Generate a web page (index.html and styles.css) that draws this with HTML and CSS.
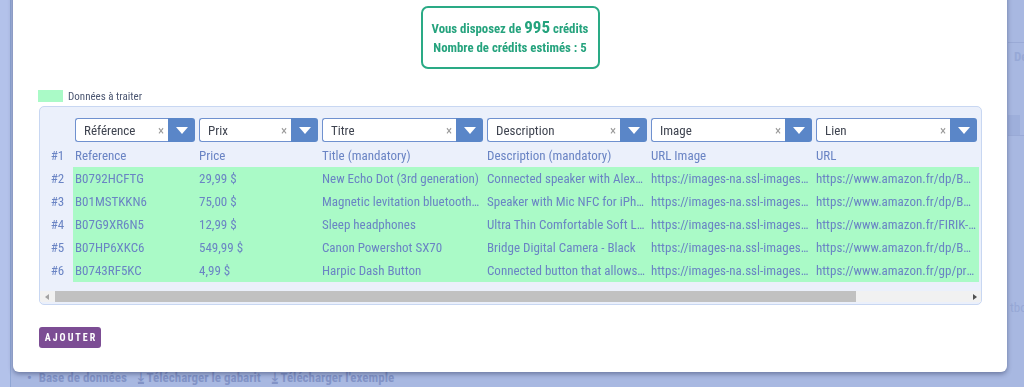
FILE: index.html
```html
<!DOCTYPE html>
<html lang="fr">
<head>
    <meta charset="UTF-8">
    <meta name="viewport" content="width=device-width, initial-scale=1.0">
    <title>Import de données</title>
    <link rel="stylesheet" href="styles.css">
</head>
<body>
    <!-- page behind the overlay -->
    <div class="page">
        <div class="sidebar"></div>
        <div class="page-main">
            <div class="page-body"></div>
            <div class="page-links">
                <span class="dot">•</span> Base de données
                <span class="dl">⤓</span> Télécharger le gabarit
                <span class="dl">⤓</span> Télécharger l'exemple
            </div>
        </div>
        <div class="page-aside">
            <div class="aside-line"></div>
            <div class="aside-title">De</div>
            <div class="aside-box"></div>
            <div class="aside-line"></div>
            <div class="aside-text">tbo</div>
        </div>
    </div>

    <div class="modal">
        <div class="credits">
            <p>Vous disposez de <span class="big">995</span> crédits</p>
            <p>Nombre de crédits estimés : 5</p>
        </div>

        <div class="legend">
            <span class="swatch"></span>
            <span>Données à traiter</span>
        </div>

        <div class="sheet-wrap">
            <div class="sheet" id="sheet"></div>
            <div class="hscroll">
                <span class="arrow left"></span>
                <span class="thumb"></span>
                <span class="arrow right"></span>
            </div>
        </div>

        <button class="btn-add">AJOUTER</button>
    </div>

    <script>
        const fields = ['Référence', 'Prix', 'Titre', 'Description', 'Image', 'Lien'];
        const rows = [
            ['Reference', 'Price', 'Title (mandatory)', 'Description (mandatory)', 'URL Image', 'URL'],
            ['B0792HCFTG', '29,99 $', 'New Echo Dot (3rd generation)', 'Connected speaker with Alexa - Charcoal fabric', 'https://images-na.ssl-images-amazon.com/images/I/6182S7MYC2L.jpg', 'https://www.amazon.fr/dp/B0792HCFTG'],
            ['B01MSTKKN6', '75,00 $', 'Magnetic levitation bluetooth speaker', 'Speaker with Mic NFC for iPhone', 'https://images-na.ssl-images-amazon.com/images/I/71nU.jpg', 'https://www.amazon.fr/dp/B01MSTKKN6'],
            ['B07G9XR6N5', '12,99 $', 'Sleep headphones', 'Ultra Thin Comfortable Soft Light', 'https://images-na.ssl-images-amazon.com/images/I/61G.jpg', 'https://www.amazon.fr/FIRIK-Sleep'],
            ['B07HP6XKC6', '549,99 $', 'Canon Powershot SX70', 'Bridge Digital Camera - Black', 'https://images-na.ssl-images-amazon.com/images/I/81x.jpg', 'https://www.amazon.fr/dp/B07HP6XKC6'],
            ['B0743RF5KC', '4,99 $', 'Harpic Dash Button', 'Connected button that allows you to order', 'https://images-na.ssl-images-amazon.com/images/I/41c.jpg', 'https://www.amazon.fr/gp/product/B0743RF5KC']
        ];

        const sheet = document.getElementById('sheet');

        // select row
        sheet.appendChild(document.createElement('div'));
        fields.forEach(name => {
            const cell = document.createElement('div');
            cell.className = 'pick';
            cell.innerHTML = `
                <div class="pick-box"><span>${name}</span><span class="clear">×</span></div>
                <div class="pick-btn"><span class="tri"></span></div>
            `;
            sheet.appendChild(cell);
        });

        rows.forEach((row, i) => {
            const num = document.createElement('div');
            num.className = 'num';
            num.textContent = '#' + (i + 1);
            sheet.appendChild(num);
            row.forEach(value => {
                const cell = document.createElement('div');
                cell.className = i === 0 ? 'cell head' : 'cell todo';
                cell.textContent = value;
                sheet.appendChild(cell);
            });
        });
    </script>
</body>
</html>
```

FILE: styles.css
```css
body {
    margin: 0;
    font-family: "Roboto Condensed", "Liberation Sans Narrow", Roboto, sans-serif;
    background-color: #a8b8e1;
    overflow: hidden;
}

.page {
    display: flex;
    height: 387px;
}

.sidebar {
    width: 10px;
    background-color: #b3c2ea;
    border-right: 1px solid #8fa6d4;
}

.page-main {
    flex: 1;
    display: flex;
    flex-direction: column;
}

.page-body {
    flex: 1;
}

.page-links {
    height: 18px;
    line-height: 18px;
    padding-left: 16px;
    font-size: 13px;
    font-weight: bold;
    color: #8293c6;
}

.page-links .dot {
    margin-right: 4px;
}

.page-links .dl {
    margin-left: 8px;
    text-decoration: underline;
}

.page-aside {
    width: 16px;
    padding-top: 42px;
    color: #97a8d6;
    font-weight: bold;
    font-size: 13px;
    overflow: hidden;
}

.aside-line {
    height: 1px;
    background-color: #9aaad6;
}

.aside-title {
    padding: 6px 0 0 6px;
    height: 66px;
}

.aside-box {
    width: 12px;
    height: 20px;
    background-color: #9eafdb;
}

.aside-text {
    margin-top: 164px;
    padding-left: 2px;
    font-weight: normal;
}

/* modal */
.modal {
    position: fixed;
    left: 13px;
    top: -12px;
    width: 994px;
    height: 384px;
    box-sizing: border-box;
    padding: 18px 25px 0 25px;
    background-color: #fff;
    border-radius: 6px;
    box-shadow: 0 2px 5px rgba(30, 40, 80, 0.45);
}

.credits {
    width: 179px;
    height: 63px;
    box-sizing: border-box;
    margin: 0 auto;
    padding-top: 10px;
    border: 2px solid #2aaa85;
    border-radius: 7px;
    text-align: center;
    color: #25a37d;
    font-weight: bold;
    font-size: 12.8px;
}

.credits p {
    margin: 0;
    line-height: 19px;
}

.credits .big {
    font-size: 17px;
}

.legend {
    display: flex;
    align-items: center;
    gap: 5px;
    margin-top: 21px;
    height: 12px;
    font-size: 11px;
    color: #4c5772;
}

.swatch {
    width: 25px;
    height: 12px;
    background-color: #aafac7;
}

.sheet-wrap {
    margin: 4px 0 0 1px;
    width: 943px;
    box-sizing: border-box;
    padding-top: 11px;
    border: 1px solid #c8d7f2;
    border-radius: 5px;
    background-color: #ebf0fb;
    overflow: hidden;
}

.sheet {
    display: grid;
    grid-template-columns: 33px 124px 123px 165px 164px 165px 165px;
    grid-template-rows: 26px;
    grid-auto-rows: 23px;
    font-size: 13px;
    color: #6a84c4;
}

.pick {
    display: flex;
    margin: 0 2px;
    height: 24px;
}

.pick-box {
    flex: 1;
    display: flex;
    align-items: center;
    justify-content: space-between;
    padding: 0 4px 0 8px;
    border: 1px solid #6f91cf;
    border-right: none;
    border-radius: 3px 0 0 3px;
    background-color: #fff;
    color: #3f4450;
    font-size: 13px;
}

.clear {
    color: #9a9a9a;
    font-size: 13px;
}

.pick-btn {
    width: 27px;
    display: flex;
    align-items: center;
    justify-content: center;
    background-color: #5a86c8;
    border-radius: 0 3px 3px 0;
}

.tri {
    width: 0;
    height: 0;
    border-left: 6px solid transparent;
    border-right: 6px solid transparent;
    border-top: 7px solid #fff;
}

.num {
    text-align: center;
    line-height: 23px;
    padding-left: 2px;
}

.cell {
    line-height: 23px;
    padding: 0 3px 0 2px;
    white-space: nowrap;
    overflow: hidden;
    text-overflow: ellipsis;
}

.todo {
    background-color: #aafac7;
}

.hscroll {
    display: flex;
    align-items: center;
    height: 11px;
    margin-top: 9px;
    margin-bottom: 2px;
    background-color: #f1f1f1;
}

.thumb {
    width: 801px;
    height: 11px;
    margin-left: 6px;
    background-color: #c1c1c1;
}

.arrow {
    width: 0;
    height: 0;
    border-top: 3px solid transparent;
    border-bottom: 3px solid transparent;
}

.arrow.left {
    margin-left: 5px;
    border-right: 4px solid #a3a3a3;
}

.arrow.right {
    margin-left: auto;
    margin-right: 4px;
    border-left: 4px solid #505050;
}

.btn-add {
    display: block;
    margin: 22px 0 0 1px;
    width: 62px;
    height: 21px;
    padding: 0 0 0 2px;
    border: none;
    border-radius: 3px;
    background-color: #7c4d94;
    color: #fff;
    font-family: inherit;
    font-weight: bold;
    font-size: 10px;
    letter-spacing: 2px;
}
```
